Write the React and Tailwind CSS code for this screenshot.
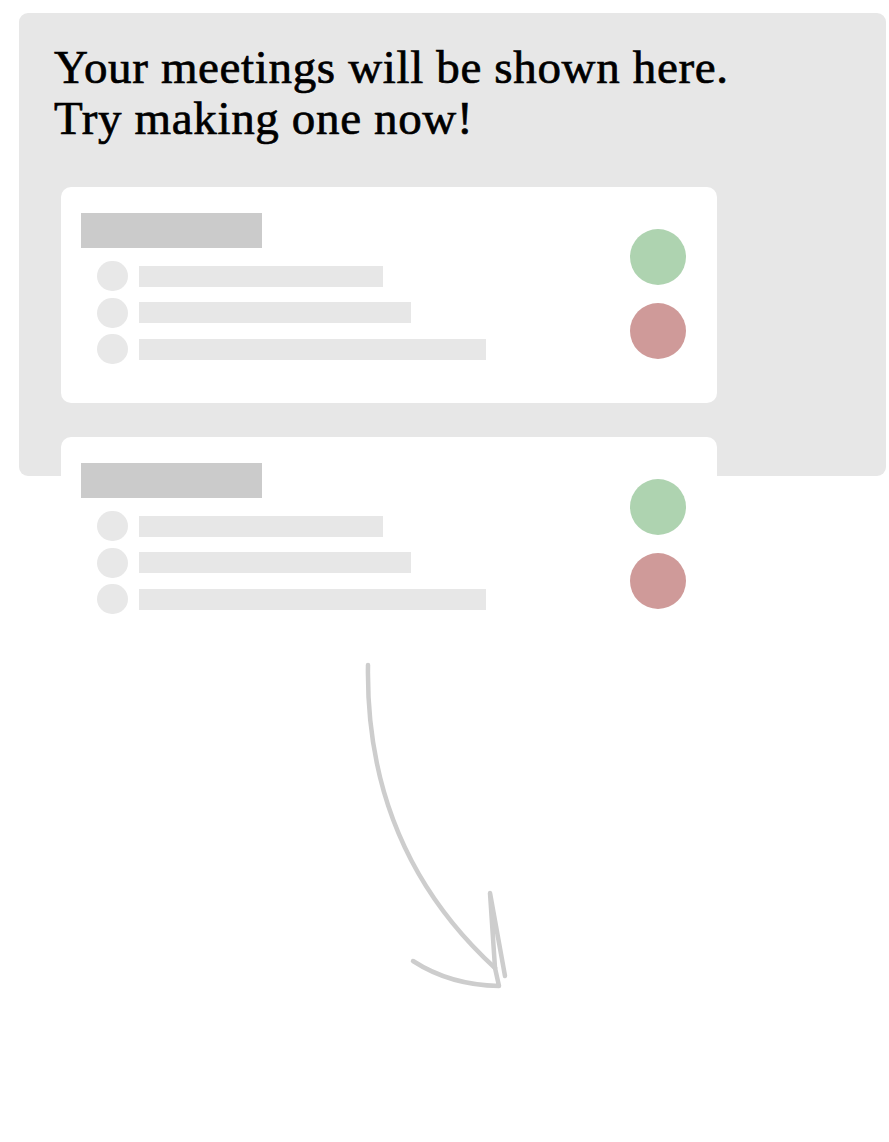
import React from "react";

const rows = [244, 272, 347];

function PlaceholderCard() {
  return (
    <div className="flex justify-between w-[656px] h-[216px] shrink-0 bg-white rounded-[10px]">
      <div className="pt-[26px] pl-[20px]">
        <div className="w-[181px] h-[35px] bg-[#cbcbcb]" />
        <div className="flex flex-col gap-[6.5px] mt-[13px] ml-[16px]">
          {rows.map((w, i) => (
            <div key={i} className="flex items-center gap-[11px]">
              <div className="w-[31px] h-[30px] rounded-full bg-[#e8e8e8]" />
              <div className="h-[21px] bg-[#e7e7e7]" style={{ width: w }} />
            </div>
          ))}
        </div>
      </div>
      <div className="flex flex-col gap-[18px] pt-[42px] pr-[31px]">
        <div className="w-[56px] h-[56px] rounded-full bg-[#aed3b0]" />
        <div className="w-[56px] h-[56px] rounded-full bg-[#cf9a99]" />
      </div>
    </div>
  );
}

export default function App() {
  return (
    <div className="min-h-screen bg-white pt-[13px]">
      {/* empty state panel, second card spills past the bottom edge */}
      <div className="ml-[19px] w-[867px] h-[463px] bg-[#e7e7e7] rounded-[9px] pt-[29px] pl-[35px]">
        <h1
          className="text-[47px] leading-[51px] tracking-[0.65px] text-black [-webkit-text-stroke:0.7px_black]"
          style={{ fontFamily: '"Liberation Serif", "DejaVu Serif", serif' }}
        >
          Your meetings will be shown here.
          <br />
          Try making one now!
        </h1>
        <div className="flex flex-col gap-[34px] mt-[43px] ml-[7px]">
          <PlaceholderCard />
          <PlaceholderCard />
        </div>
      </div>

      <div className="ml-[340px] mt-[174px]">
        <svg width="200" height="360" viewBox="0 0 200 360" fill="none">
          <g stroke="#cdcdcd" strokeWidth="4.5" strokeLinecap="round" strokeLinejoin="round">
            <path d="M28 15 C26 140 70 240 155 318" />
            <path d="M155 318 L150 243 L165 326" />
            <path d="M73 311 Q110 335 159 336 L155 318" />
          </g>
        </svg>
      </div>
    </div>
  );
}
